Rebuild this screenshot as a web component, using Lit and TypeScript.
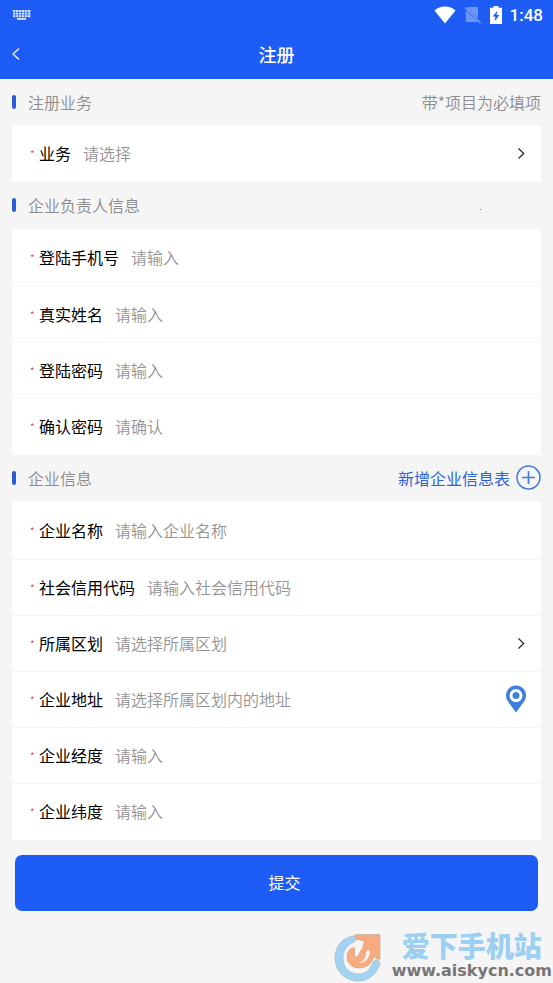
import { LitElement, html, css, svg, nothing } from "lit";
import { customElement, property } from "lit/decorators.js";

interface Field {
  id: string;
  label: string;
  hint: string;
  kind?: "text" | "tel" | "password" | "select" | "place";
}

const business: Field[] = [{ id: "biz", label: "业务", hint: "请选择", kind: "select" }];

const owner: Field[] = [
  { id: "phone", label: "登陆手机号", hint: "请输入", kind: "tel" },
  { id: "realname", label: "真实姓名", hint: "请输入" },
  { id: "pwd", label: "登陆密码", hint: "请输入", kind: "password" },
  { id: "pwd2", label: "确认密码", hint: "请确认", kind: "password" },
];

const company: Field[] = [
  { id: "cname", label: "企业名称", hint: "请输入企业名称" },
  { id: "credit", label: "社会信用代码", hint: "请输入社会信用代码" },
  { id: "area", label: "所属区划", hint: "请选择所属区划", kind: "select" },
  { id: "addr", label: "企业地址", hint: "请选择所属区划内的地址", kind: "place" },
  { id: "lng", label: "企业经度", hint: "请输入" },
  { id: "lat", label: "企业纬度", hint: "请输入" },
];

@customElement("status-bar")
export class StatusBar extends LitElement {
  static styles = css`
    :host {
      display: flex;
      align-items: center;
      height: 30px;
      padding: 0 10px 0 13px;
      color: #fff;
      font: 500 17px/30px Roboto, sans-serif;
    }
    .gap {
      flex: 1;
    }
    .right {
      display: flex;
      align-items: center;
      gap: 8px;
    }
    svg {
      display: block;
    }
  `;

  render() {
    const keys = [0, 1, 2].flatMap((r) =>
      [0, 1, 2, 3, 4, 5].map(
        (c) => svg`<rect x=${c * 3} y=${r * 2.6} width="2.4" height="2"/>`
      )
    );
    return html`
      <svg width="18" height="11" viewBox="0 0 18 11" fill="#d6e3ff" aria-hidden="true">
        ${keys}
        <rect x="4" y="8" width="9" height="1.8" />
      </svg>
      <span class="gap"></span>
      <div class="right">
        <svg width="22" height="18" viewBox="0 0 22 18" fill="#fff" aria-hidden="true">
          <path d="M0.5 4.6C6 -0.9 16 -0.9 21.5 4.6L11 17.6Z" />
        </svg>
        <svg width="18" height="18" viewBox="0 0 18 18" aria-hidden="true">
          <path d="M4 1H14V12.5L3 2.4ZM1.8 4.4L14 16H1.8Z" fill="#6f97fa" />
          <path d="M1 1.5L16.5 17" stroke="#7ea2fb" stroke-width="1.4" fill="none" />
        </svg>
        <svg width="12" height="18" viewBox="0 0 12 18" aria-hidden="true">
          <path d="M3.5 0H8.5V1.8H12V18H0V1.8H3.5Z" fill="#fff" />
          <path d="M7.6 4.5L2.6 10.6H5.4L4.6 15.2L9.4 9H6.6Z" fill="#1e5df5" />
        </svg>
        <span>1:48</span>
      </div>
    `;
  }
}

@customElement("section-head")
export class SectionHead extends LitElement {
  @property() heading = "";

  static styles = css`
    :host {
      display: flex;
      align-items: center;
      justify-content: space-between;
      box-sizing: border-box;
      height: 47px;
      padding-bottom: 2px;
      color: #8c8c8c;
    }
    h2 {
      display: flex;
      align-items: center;
      gap: 12px;
      margin: 0;
      font-size: 16px;
      line-height: 24px;
      font-weight: 350;
    }
    h2::before {
      content: "";
      width: 4px;
      height: 14px;
      border-radius: 2px;
      background: #2b5cd6;
    }
  `;

  render() {
    return html`<h2>${this.heading}</h2><slot></slot>`;
  }
}

@customElement("field-card")
export class FieldCard extends LitElement {
  @property({ attribute: false }) fields: Field[] = [];

  static styles = css`
    :host {
      display: block;
      background: #fff;
    }
    .rows {
      padding: 1px 0;
    }
    .row {
      display: flex;
      align-items: center;
      box-sizing: border-box;
      height: 56px;
      padding: 0 14px 2px 18px;
    }
    .row + .row {
      border-top: 1px solid #f4f4f4;
    }
    .star {
      width: 9px;
      padding-top: 2px;
      color: #e0525c;
      font-size: 10px;
      line-height: 16px;
    }
    label {
      color: #000;
      margin-right: 12px;
      white-space: nowrap;
    }
    input,
    select {
      flex: 1;
      min-width: 0;
      height: 32px;
      margin: 0;
      padding: 0;
      border: 0;
      outline: 0;
      background: none;
      appearance: none;
      font: inherit;
      font-weight: 350;
      color: #949494;
    }
    input::placeholder {
      color: #949494;
      opacity: 1;
    }
    svg {
      display: block;
    }
    button {
      padding: 0;
      border: 0;
      background: none;
    }
  `;

  private control(f: Field) {
    if (f.kind === "select") {
      return html`
        <select id=${f.id}>
          <option>${f.hint}</option>
        </select>
        <svg width="12" height="12" viewBox="0 0 12 12" aria-hidden="true">
          <path d="M3.5 1.5L8.7 6.5L3.5 11.5" fill="none" stroke="#222" stroke-width="1.2" />
        </svg>
      `;
    }
    const type = f.kind === "tel" || f.kind === "password" ? f.kind : "text";
    return html`
      <input id=${f.id} type=${type} placeholder=${f.hint} />
      ${f.kind === "place"
        ? html`<button type="button" aria-label="选择地址">
            <svg width="22" height="28" viewBox="0 0 22 28">
              <path
                d="M11 0.6C5.3 0.6 1 5 1 10.4C1 13.4 2.3 15.6 4 18L11 27.4L18 18C19.7 15.6 21 13.4 21 10.4C21 5 16.7 0.6 11 0.6Z"
                fill="#3d7fdb"
              />
              <circle cx="11" cy="10.6" r="5" fill="none" stroke="#fff" stroke-width="3" />
            </svg>
          </button>`
        : nothing}
    `;
  }

  render() {
    return html`<div class=${this.fields.length > 1 ? "rows" : "single"}>
      ${this.fields.map(
        (f) => html`<div class="row">
          <span class="star">*</span>
          <label for=${f.id}>${f.label}</label>
          ${this.control(f)}
        </div>`
      )}
    </div>`;
  }
}

@customElement("app-root")
export class AppRoot extends LitElement {
  static styles = css`
    :host {
      display: block;
      position: relative;
      box-sizing: border-box;
      min-height: 100vh;
      background: #f5f5f5;
      font: 400 16px/24px "Noto Sans CJK SC", sans-serif;
    }
    header {
      background: #1e5df5;
      color: #fff;
    }
    nav {
      display: grid;
      grid-template-columns: 40px 1fr 40px;
      align-items: center;
      box-sizing: border-box;
      height: 49px;
      padding-bottom: 2px;
    }
    h1 {
      margin: 0;
      text-align: center;
      font-size: 18px;
      line-height: 24px;
      font-weight: 500;
    }
    button {
      font: inherit;
      border: 0;
      background: none;
      cursor: pointer;
    }
    .back {
      padding: 8px 10px;
      color: #fff;
    }
    svg {
      display: block;
    }
    form {
      padding: 0 12px;
    }
    .note {
      font-weight: 350;
    }
    .add {
      display: flex;
      align-items: center;
      gap: 6px;
      padding: 0;
      color: #2f62d9;
    }
    .submit {
      display: block;
      width: calc(100% - 6px);
      height: 56px;
      margin: 15px 3px 0;
      padding: 0 0 2px 16px;
      border-radius: 7px;
      background: #1e5df5;
      color: #fff;
    }
    .dot {
      position: absolute;
      top: 209px;
      right: 72px;
      width: 1px;
      height: 1px;
      background: #1fc08a;
    }
    .mark {
      position: absolute;
      right: 1px;
      bottom: 0;
      display: flex;
      align-items: flex-end;
      gap: 10px;
    }
    .words {
      display: flex;
      flex-direction: column;
      align-items: center;
    }
    .brand {
      color: #9ccff2;
      font-size: 28px;
      line-height: 28px;
      font-weight: 900;
    }
    .url {
      color: #757575;
      font: 700 16px/24px "DejaVu Sans", sans-serif;
    }
  `;

  render() {
    return html`
      <header>
        <status-bar></status-bar>
        <nav>
          <button class="back" type="button" aria-label="返回">
            <svg width="12" height="14" viewBox="0 0 12 14">
              <path d="M9 1.5L3 7L9 12.5" fill="none" stroke="#fff" stroke-width="1.2" />
            </svg>
          </button>
          <h1>注册</h1>
        </nav>
      </header>
      <form>
        <section-head heading="注册业务"><span class="note">带*项目为必填项</span></section-head>
        <field-card .fields=${business}></field-card>
        <section-head heading="企业负责人信息"></section-head>
        <field-card .fields=${owner}></field-card>
        <section-head heading="企业信息">
          <button class="add" type="button">
            新增企业信息表
            <svg width="25" height="25" viewBox="0 0 25 25" fill="none" stroke="#3f7bdc" aria-hidden="true">
              <circle cx="12.5" cy="12.5" r="11.5" stroke-width="1.5" />
              <path d="M12.5 6V19M6 12.5H19" stroke-width="1.6" />
            </svg>
          </button>
        </section-head>
        <field-card .fields=${company}></field-card>
        <button class="submit" type="submit">提交</button>
      </form>
      <span class="dot"></span>
      <div class="mark">
        <svg width="48" height="50" viewBox="0 0 48 50" aria-hidden="true">
          <path
            d="M20 3C9 4 1 13 1 25C1 38 11 48 24 48C35 48 43 41 46 30C46 27 41 26 39 29C36 37 31 41 25 41C15 41 9 34 9 25C9 17 13 12 20 9C23 7 23 3 20 3Z"
            fill="#a3d3f3" stroke="#a5b4bd" stroke-width="0.6"
          />
          <path
            d="M22 1.5H46V26C43 27 40 25 40 22C39 30 33 35 25 35C18 35 13 30 13 24C13 20 15 16 18 15C21 14 22 16 21 19C20 22 21 24 23 23L30 8L22 6C20 5 20 2 22 1.5Z"
            fill="#f9ab80" stroke="#b9a79c" stroke-width="0.6"
          />
          <path d="M30 8L21 14.5L21 23L23 23.5L28 15Z" fill="#f7f7f7" />
          <path d="M32 20C32 25 29 29 24 30C30 30 35 27 36 19C35 16 32 17 32 20Z" fill="#f7f7f7" />
        </svg>
        <div class="words">
          <span class="brand">爱下手机站</span>
          <span class="url">www.aiskycn.com</span>
        </div>
      </div>
    `;
  }
}
